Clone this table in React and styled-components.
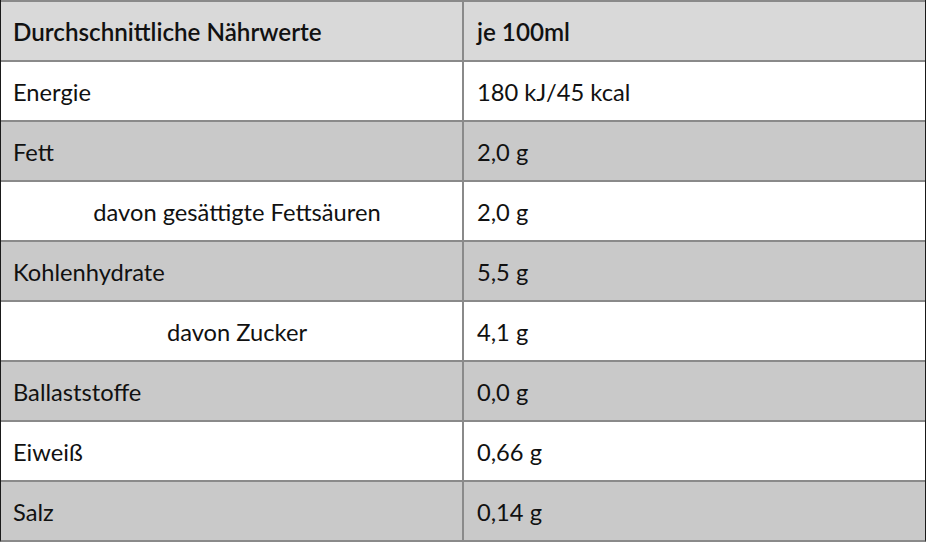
import React from "react";
import styled, { createGlobalStyle } from "styled-components";

const Global = createGlobalStyle`
  html, body { margin: 0; padding: 0; background: #ffffff; }
  body { font-family: Lato, "Open Sans", sans-serif; }
`;

const Table = styled.div`
  width: 926px;
  height: 542px;
  box-sizing: border-box;
  border-left: 1px solid #1a1a1a;
  border-right: 1px solid #1a1a1a;
  border-bottom: 2px solid #8a8a8a;
  display: flex;
  flex-direction: column;
`;

const Row = styled.div`
  display: grid;
  grid-template-columns: 463px 1fr;
  height: 60px;
  box-sizing: border-box;
  border-top: 2px solid #8a8a8a;
  background: ${(p) => (p.$tone === "head" ? "#d9d9d9" : p.$tone === "shade" ? "#c9c9c9" : "#ffffff")};
`;

const Cell = styled.div`
  display: flex;
  align-items: center;
  box-sizing: border-box;
  border-right: ${(p) => (p.$first ? "2px solid #8a8a8a" : "none")};
  justify-content: ${(p) => (p.$center ? "center" : "flex-start")};
  padding-left: ${(p) => (p.$center ? "11px" : p.$first ? "12px" : "13px")};
  font-size: ${(p) => (p.$bold ? "24.2px" : "23.7px")};
  font-weight: ${(p) => (p.$bold ? 600 : 400)};
  color: #111111;
  white-space: nowrap;
  padding-top: 1px;
`;

const rows = [
  ["Energie", "180 kJ/45 kcal", "plain"],
  ["Fett", "2,0 g", "shade"],
  ["davon gesättigte Fettsäuren", "2,0 g", "plain", true],
  ["Kohlenhydrate", "5,5 g", "shade"],
  ["davon Zucker", "4,1 g", "plain", true],
  ["Ballaststoffe", "0,0 g", "shade"],
  ["Eiweiß", "0,66 g", "plain"],
  ["Salz", "0,14 g", "shade"],
];

export default function App() {
  return (
    <>
      <Global />
      <Table>
        <Row $tone="head">
          <Cell $first $bold>Durchschnittliche Nährwerte</Cell>
          <Cell $bold>je 100ml</Cell>
        </Row>
        {rows.map(([label, value, tone, sub]) => (
          <Row key={label} $tone={tone}>
            <Cell $first $center={sub}>{label}</Cell>
            <Cell>{value}</Cell>
          </Row>
        ))}
      </Table>
    </>
  );
}
